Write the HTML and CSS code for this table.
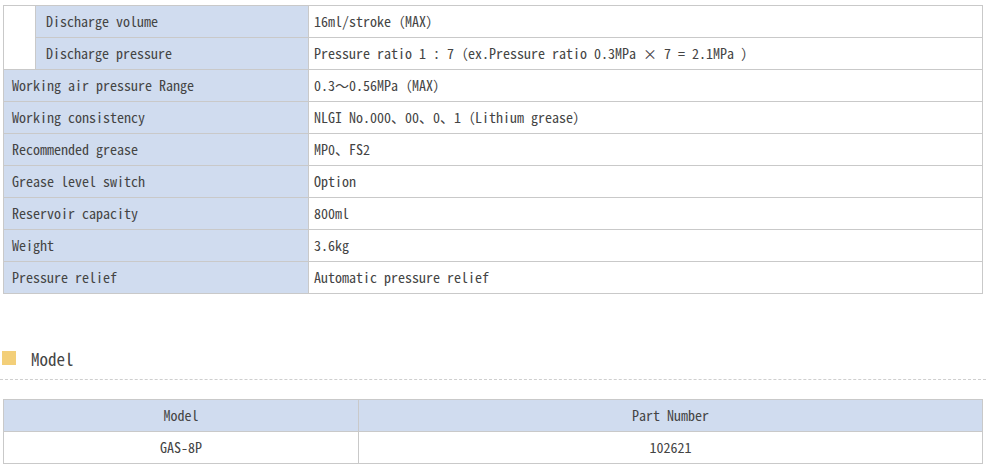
FILE: index.html
```html
<!DOCTYPE html>
<html>
<head>
<meta charset="utf-8">
<link rel="stylesheet" href="styles.css">
</head>
<body>
<table class="spec">
  <colgroup><col class="c-grp"><col class="c-label"><col class="c-val"></colgroup>
  <tr><td class="grp" rowspan="2"></td><td class="lab">Discharge volume</td><td class="val">16ml/stroke（MAX）</td></tr>
  <tr><td class="lab">Discharge pressure</td><td class="val">Pressure ratio 1 : 7（ex.Pressure ratio 0.3MPa × 7 = 2.1MPa ）</td></tr>
  <tr><td class="lab full" colspan="2">Working air pressure Range</td><td class="val">0.3〜0.56MPa（MAX）</td></tr>
  <tr><td class="lab full" colspan="2">Working consistency</td><td class="val">NLGI No.000、00、0、1（Lithium grease）</td></tr>
  <tr><td class="lab full" colspan="2">Recommended grease</td><td class="val">MP0、FS2</td></tr>
  <tr><td class="lab full" colspan="2">Grease level switch</td><td class="val">Option</td></tr>
  <tr><td class="lab full" colspan="2">Reservoir capacity</td><td class="val">800ml</td></tr>
  <tr><td class="lab full" colspan="2">Weight</td><td class="val">3.6kg</td></tr>
  <tr><td class="lab full" colspan="2">Pressure relief</td><td class="val">Automatic pressure relief</td></tr>
</table>

<div class="heading"><span class="mark"></span><span class="title">Model</span></div>

<table class="model">
  <colgroup><col class="m-model"><col class="m-part"></colgroup>
  <tr><th>Model</th><th>Part Number</th></tr>
  <tr><td>GAS-8P</td><td>102621</td></tr>
</table>
</body>
</html>
```
FILE: styles.css
```css
html, body {
  margin: 0;
  padding: 0;
  background: #fff;
}
body {
  font-family: "Noto Sans Mono CJK JP", "Noto Sans CJK JP", monospace;
  font-size: 14px;
  color: #444;
  padding: 5px 4px 0 3px;
}
table {
  border-collapse: collapse;
  table-layout: fixed;
  width: 979px;
}
td, th {
  border: 1px solid #c9c9c9;
  height: 31px;
  padding: 0;
  font-weight: normal;
  white-space: nowrap;
  line-height: 31px;
}
.c-grp { width: 32px; }
.c-label { width: 273px; }
.c-val { width: 674px; }
.grp { background: #fff; }
.lab {
  background: #d0dcef;
  padding-left: 10px;
}
.lab.full { padding-left: 8px; }
.val { padding-left: 5px; }

.heading {
  margin: 49px -4px 0 -3px;
  height: 30px;
  padding: 0 0 6px 2px;
  border-bottom: 1px dashed #cfcfcf;
  display: flex;
  align-items: center;
  gap: 15px;
}
.mark {
  width: 14px;
  height: 14px;
  background: #f3cf79;
}
.title {
  font-size: 17px;
  color: #444;
}
.model {
  margin-top: 19px;
}
.m-model { width: 355px; }
.m-part { width: 624px; }
.model th { background: #d0dcef; text-align: center; }
.model td { text-align: center; }
```
